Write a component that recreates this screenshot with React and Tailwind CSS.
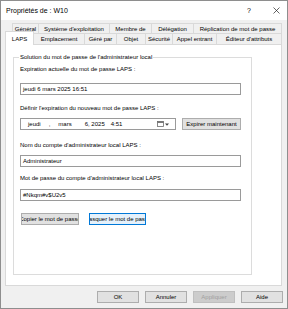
const row1 = [
  { label: "Général", cls: "w-[26px] border-l" },
  { label: "Système d'exploitation", cls: "w-[71px] border-l" },
  { label: "Membre de", cls: "w-[42px] border-l" },
  { label: "Délégation", cls: "w-[42px] border-l" },
  { label: "Réplication de mot de passe", cls: "w-[89px] border-l border-r" },
];

const row2 = [
  { label: "Emplacement", cls: "w-[50px]" },
  { label: "Géré par", cls: "w-[32px] border-l" },
  { label: "Objet", cls: "w-[29px] border-l" },
  { label: "Sécurité", cls: "w-[27px] border-l" },
  { label: "Appel entrant", cls: "w-[44px] border-l" },
  { label: "Éditeur d'attributs", cls: "w-[66px] border-l border-r" },
];

function Field({ children, className = "" }) {
  return (
    <div
      className={`h-[12px] w-[221px] border border-[#9a9a9a] bg-white flex items-center pl-[2px] whitespace-nowrap ${className}`}
    >
      {children}
    </div>
  );
}

function Btn({ children, className = "" }) {
  return (
    <div
      className={`h-[12px] border flex items-center justify-center overflow-hidden whitespace-nowrap ${className}`}
    >
      {children}
    </div>
  );
}

export default function App() {
  return (
    <div className="w-[288px] h-[309px] border border-[#8e8e8e] bg-[#f0f0f0] flex flex-col text-[6px] leading-[8px] text-black font-['Liberation_Sans',Arial,sans-serif] overflow-hidden">
      {/* Title bar */}
      <div className="h-[19px] shrink-0 bg-white flex items-center">
        <span className="ml-[5px] text-[7px] leading-[9px]">Propriétés de : W10</span>
        <span className="ml-auto mr-[22px] text-[7px] leading-[9px]">?</span>
        <svg className="mr-[7px]" width="7" height="7" viewBox="0 0 7 7">
          <path d="M0.5 0.5L6.5 6.5M6.5 0.5L0.5 6.5" stroke="#222" strokeWidth="0.7" fill="none" />
        </svg>
      </div>

      {/* Tabs row 1 */}
      <div className="mt-[3px] ml-[11px] flex h-[10px] shrink-0">
        {row1.map((t) => (
          <div
            key={t.label}
            className={`${t.cls} h-[10px] border-t border-[#d9d9d9] flex items-center justify-center whitespace-nowrap`}
          >
            {t.label}
          </div>
        ))}
      </div>

      {/* Tabs row 2 */}
      <div className="ml-[4px] flex items-end h-[11px] shrink-0">
        <div className="relative z-10 w-[29px] h-[14px] -mb-px bg-white border-t border-l border-r border-[#d9d9d9] flex items-center justify-center">
          LAPS
        </div>
        {row2.map((t) => (
          <div
            key={t.label}
            className={`${t.cls} h-[11px] border-t border-[#d9d9d9] flex items-center justify-center whitespace-nowrap`}
          >
            {t.label}
          </div>
        ))}
      </div>

      {/* Panel */}
      <div className="ml-[4px] w-[277px] h-[242px] shrink-0 bg-white border border-[#d9d9d9]">
        <div className="ml-[7px] mt-[12px] w-[239px] h-[218px] border border-[#dcdcdc]">
          <div className="-mt-[5px] ml-[5px] w-fit px-[1px] bg-white h-[8px] whitespace-nowrap">
            Solution du mot de passe de l'administrateur local
          </div>
          <div className="pl-[6px] flex flex-col">
            <div className="mt-[4px] h-[8px]">Expiration actuelle du mot de passe LAPS :</div>
            <Field className="mt-[10px]">jeudi 6 mars 2025 16:51</Field>

            <div className="mt-[9px] h-[8px]">Définir l'expiration du nouveau mot de passe LAPS :</div>
            <div className="mt-[6px] h-[12px] flex">
              <div className="w-[156px] h-[12px] border border-[#9a9a9a] bg-white flex items-center whitespace-nowrap">
                <span className="ml-[7px]">jeudi</span>
                <span className="ml-[8px]">,</span>
                <span className="ml-[8px]">mars</span>
                <span className="ml-[13px]">6, 2025</span>
                <span className="ml-[6px]">4:51</span>
                <svg className="ml-auto" width="7" height="6" viewBox="0 0 7 6">
                  <rect x="0.5" y="0.5" width="6" height="5" fill="#fff" stroke="#6b6b6b" strokeWidth="0.8" />
                  <rect x="0.5" y="0.5" width="6" height="1.4" fill="#6b6b6b" />
                </svg>
                <svg className="ml-[1px] mr-[6px]" width="4" height="3" viewBox="0 0 4 3">
                  <path d="M0 0.5H4L2 2.7Z" fill="#444" />
                </svg>
              </div>
              <Btn className="ml-[6px] w-[59px] border-[#adadad] bg-[#e1e1e1]">Expirer maintenant</Btn>
            </div>

            <div className="mt-[11px] h-[8px]">Nom du compte d'administrateur local LAPS :</div>
            <Field className="mt-[6px]">Administrateur</Field>

            <div className="mt-[7px] h-[8px]">Mot de passe du compte d'administrateur local LAPS :</div>
            <Field className="mt-[7px]">#Nkqm#v$U2v5</Field>

            <div className="mt-[12px] flex">
              <Btn className="ml-[1px] w-[58px] border-[#adadad] bg-[#e1e1e1]">Copier le mot de passe</Btn>
              <Btn className="ml-[10px] w-[57px] border-[#0078d7] bg-[#e5f1fb]">Masquer le mot de passe</Btn>
            </div>
          </div>
        </div>
      </div>

      {/* Bottom buttons */}
      <div className="mt-[5px] flex justify-end gap-[6px] pr-[4px]">
        <Btn className="w-[42px] border-[#adadad] bg-[#e1e1e1]">OK</Btn>
        <Btn className="w-[42px] border-[#adadad] bg-[#e1e1e1]">Annuler</Btn>
        <Btn className="w-[42px] border-[#bfbfbf] bg-[#cccccc] text-[#a0a0a0]">Appliquer</Btn>
        <Btn className="w-[42px] border-[#adadad] bg-[#e1e1e1]">Aide</Btn>
      </div>
    </div>
  );
}
